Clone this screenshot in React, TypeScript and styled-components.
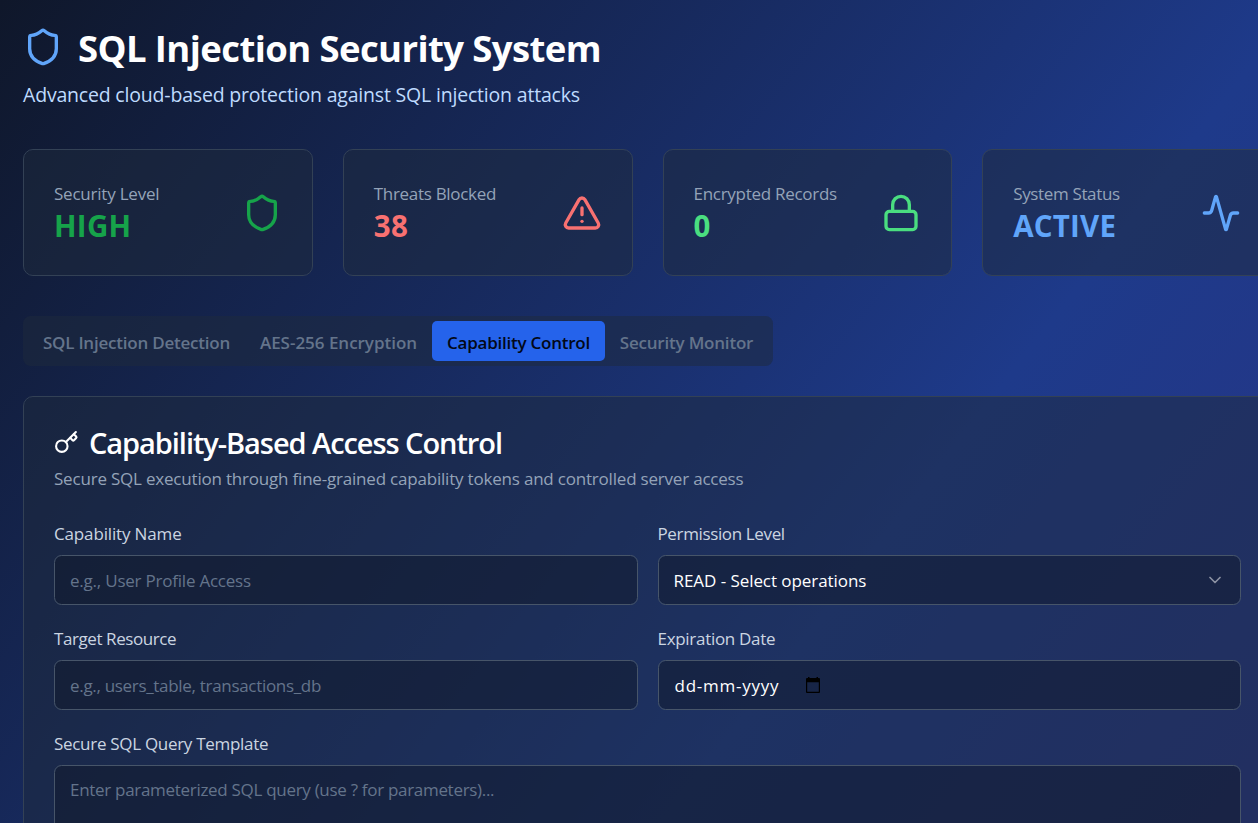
import React from "react";
import styled, { createGlobalStyle, css } from "styled-components";
import { Activity, ChevronDown, Key, Lock, Shield, TriangleAlert } from "lucide-react";

const Global = createGlobalStyle`
  *, *::before, *::after { box-sizing: border-box; }
  html, body { margin: 0; padding: 0; overflow: hidden; background: #0f172a; }
  body { font-family: "Open Sans", "Noto Sans", sans-serif; font-size: 20px; line-height: 30px; }
  button, input, textarea { font-family: inherit; }
`;

const Viewport = styled.div`
  height: 823px;
  overflow: hidden;
`;

const Page = styled.div`
  width: 1302px;
  height: 1670px;
  padding: 24px 30px 30px 23px;
  background: linear-gradient(to bottom right, #0f172a, #1e3a8a, #312e81);
`;

/* Letter spacing in px, set per string */
const Txt = styled.span<{ $ls?: number }>`
  display: inline-block;
  white-space: nowrap;
  letter-spacing: ${(p) => p.$ls ?? 0}px;
`;

const Header = styled.header`
  margin-bottom: 39px;
`;

const TitleRow = styled.div`
  display: flex;
  align-items: center;
  gap: 15px;
  height: 45px;
  margin-bottom: 11px;
  color: #60a5fa;
`;

const Title = styled.h1`
  margin: 0;
  padding-top: 3px;
  color: #fff;
  font-size: 36.5px;
  font-weight: 700;
  line-height: 45px;
`;

const Subtitle = styled.p`
  margin: 0;
  color: #bfdbfe;
  font-size: 19.5px;
  line-height: 30px;
`;

const Stats = styled.section`
  display: grid;
  grid-template-columns: repeat(4, 1fr);
  gap: 30px;
  margin-bottom: 40px;
`;

const panel = css`
  border: 1px solid #334155;
  border-radius: 10px;
  background: rgba(30, 41, 59, 0.5);
  background-clip: padding-box;
`;

const StatCard = styled.div<{ $color: string }>`
  ${panel}
  display: flex;
  align-items: center;
  justify-content: space-between;
  height: 127px;
  padding: 30px;
  color: ${(p) => p.$color};
`;

const StatLabel = styled.div`
  padding-top: 2px;
  color: #94a3b8;
  font-size: 17px;
  line-height: 25px;
`;

const StatValue = styled.div`
  font-size: 29.5px;
  font-weight: 700;
  line-height: 40px;
`;

const TabList = styled.div`
  display: inline-flex;
  height: 50px;
  padding: 5px;
  margin-bottom: 30px;
  border-radius: 7.5px;
  background: rgba(30, 41, 59, 0.5);
  vertical-align: top;
`;

const Tab = styled.button<{ $active?: boolean; $w: number }>`
  width: ${(p) => p.$w}px;
  height: 40px;
  padding: 2px 0 0;
  border: 0;
  border-radius: 5px;
  background: ${(p) => (p.$active ? "#2563eb" : "transparent")};
  color: ${(p) => (p.$active ? "#020817" : "#64748b")};
  font-size: 17px;
  font-weight: 600;
  line-height: 25px;
`;

const Panel = styled.section`
  ${panel}
  height: 800px;
  padding: 30px;
`;

const PanelTitle = styled.h2`
  display: flex;
  align-items: center;
  gap: 10px;
  height: 31px;
  margin: 0 0 8px;
  color: #fff;
  font-size: 29px;
  font-weight: 600;
  line-height: 30px;
`;

const PanelText = styled.p`
  margin: 0 0 29px;
  color: #94a3b8;
  font-size: 17px;
  line-height: 25px;
`;

const FormGrid = styled.div`
  display: grid;
  grid-template-columns: 1fr 1fr;
  gap: 20px;
`;

const Field = styled.div<{ $wide?: boolean }>`
  display: flex;
  flex-direction: column;
  gap: 9px;
  grid-column: ${(p) => (p.$wide ? "1 / -1" : "auto")};
`;

const Label = styled.label`
  height: 26px;
  padding-top: 1px;
  color: #cbd5e1;
  font-size: 17px;
  line-height: 25px;
`;

const Control = styled.div<{ $placeholder?: boolean; $tall?: boolean }>`
  display: flex;
  align-items: ${(p) => (p.$tall ? "flex-start" : "center")};
  height: ${(p) => (p.$tall ? 125 : 50)}px;
  padding: ${(p) => (p.$tall ? "11px 15px" : "0 15px")};
  border: 1px solid #475569;
  border-radius: 7.5px;
  background: rgba(15, 23, 42, 0.5);
  background-clip: padding-box;
  color: ${(p) => (p.$placeholder ? "#64748b" : "#fff")};
  font-size: 17px;
  line-height: 25px;
`;

const DateControl = styled(Control)`
  padding-left: 16px;
`;

const Chevron = styled(ChevronDown)`
  margin-left: auto;
  color: #fff;
  opacity: 0.5;
`;

const CalendarMark = styled.svg`
  margin-left: 26px;
`;

const stats = [
  { label: "Security Level", ls: -0.22, value: "HIGH", vls: 0.3, color: "#16a34a", Icon: Shield },
  { label: "Threats Blocked", ls: -0.3, value: "38", vls: 0.5, color: "#f87171", Icon: TriangleAlert },
  { label: "Encrypted Records", ls: -0.28, value: "0", vls: 0, color: "#4ade80", Icon: Lock },
  { label: "System Status", ls: -0.36, value: "ACTIVE", vls: 0.2, color: "#60a5fa", Icon: Activity },
];

const tabs = [
  { label: "SQL Injection Detection", ls: -0.22, w: 217 },
  { label: "AES-256 Encryption", ls: -0.02, w: 187 },
  { label: "Capability Control", ls: -0.24, w: 173, active: true },
  { label: "Security Monitor", ls: -0.2, w: 163 },
];

export default function App() {
  return (
    <Viewport>
      <Global />
      <Page>
        <Header>
          <TitleRow>
            <Shield size={40} />
            <Title><Txt $ls={-0.6}>SQL Injection Security System</Txt></Title>
          </TitleRow>
          <Subtitle><Txt $ls={-0.19}>Advanced cloud-based protection against SQL injection attacks</Txt></Subtitle>
        </Header>

        <Stats>
          {stats.map(({ label, ls, value, vls, color, Icon }) => (
            <StatCard key={label} $color={color}>
              <div>
                <StatLabel><Txt $ls={ls}>{label}</Txt></StatLabel>
                <StatValue><Txt $ls={vls}>{value}</Txt></StatValue>
              </div>
              <Icon size={40} />
            </StatCard>
          ))}
        </Stats>

        <TabList>
          {tabs.map((t) => (
            <Tab key={t.label} $active={t.active} $w={t.w}>
              <Txt $ls={t.ls}>{t.label}</Txt>
            </Tab>
          ))}
        </TabList>

        <Panel>
          <PanelTitle>
            <Key size={25} />
            <Txt $ls={-1.06}>Capability-Based Access Control</Txt>
          </PanelTitle>
          <PanelText>
            <Txt $ls={-0.2}>Secure SQL execution through fine-grained capability tokens and controlled server access</Txt>
          </PanelText>
          <FormGrid>
            <Field>
              <Label><Txt $ls={-0.15}>Capability Name</Txt></Label>
              <Control $placeholder><Txt $ls={-0.22}>e.g., User Profile Access</Txt></Control>
            </Field>
            <Field>
              <Label><Txt $ls={-0.36}>Permission Level</Txt></Label>
              <Control>
                <Txt $ls={-0.06}>READ - Select operations</Txt>
                <Chevron size={20} />
              </Control>
            </Field>
            <Field>
              <Label><Txt $ls={-0.42}>Target Resource</Txt></Label>
              <Control $placeholder><Txt $ls={-0.31}>e.g., users_table, transactions_db</Txt></Control>
            </Field>
            <Field>
              <Label><Txt $ls={-0.3}>Expiration Date</Txt></Label>
              <DateControl>
                <Txt $ls={0.76}>dd-mm-yyyy</Txt>
                <CalendarMark width="16" height="17" viewBox="0 0 16 17" fill="#000">
                  <path fillRule="evenodd" d="M3 0h1.5v1h7V0H13v1h1a1 1 0 0 1 1 1v13a1 1 0 0 1-1 1H2a1 1 0 0 1-1-1V2a1 1 0 0 1 1-1h1zM2.2 5.2v9.6h11.6V5.2z" />
                </CalendarMark>
              </DateControl>
            </Field>
            <Field $wide>
              <Label><Txt $ls={-0.3}>Secure SQL Query Template</Txt></Label>
              <Control $placeholder $tall>
                <Txt $ls={-0.3}>Enter parameterized SQL query (use ? for parameters)...</Txt>
              </Control>
            </Field>
          </FormGrid>
        </Panel>
      </Page>
    </Viewport>
  );
}
